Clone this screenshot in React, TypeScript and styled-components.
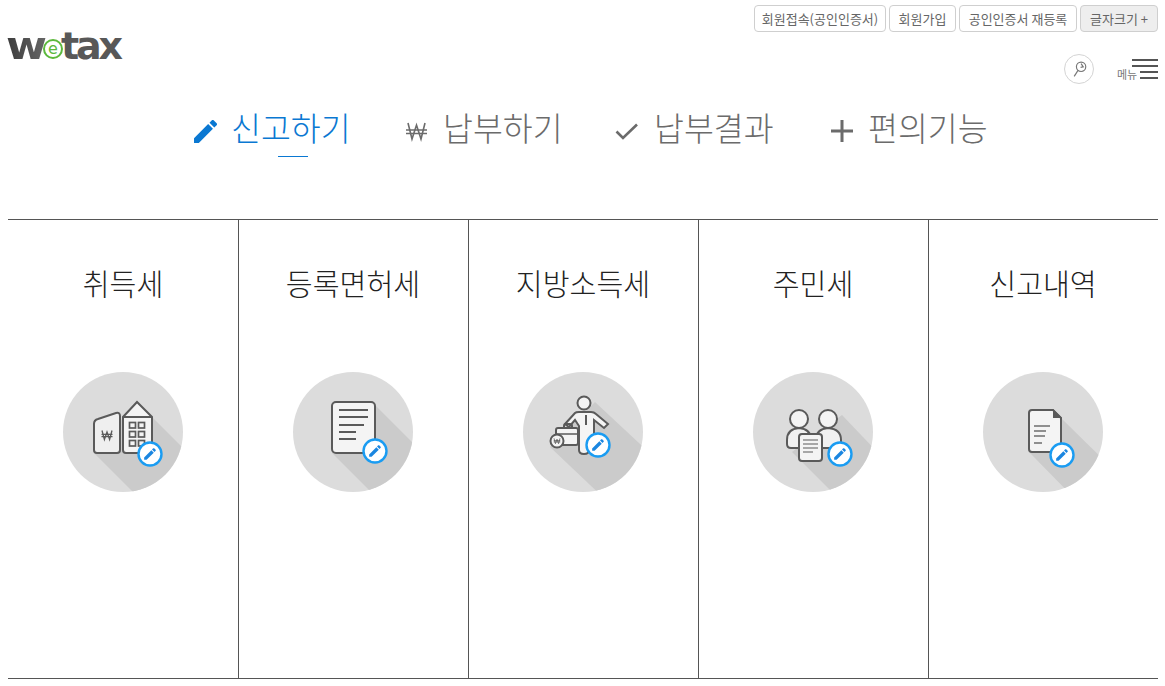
import React from 'react'
import styled, { createGlobalStyle } from 'styled-components'

const GlobalStyle = createGlobalStyle`
  html, body {
    margin: 0;
    padding: 0;
    background: #fff;
    font-family: "Noto Sans CJK KR", "Noto Sans", sans-serif;
  }
`

const Page = styled.div`
  width: 1150px;
  height: 686px;
  padding: 0 7px 0 8px;
  overflow: hidden;
`

const Header = styled.header`
  display: flex;
  justify-content: space-between;
  height: 105px;
`

const Logo = styled.div`
  display: flex;
  align-items: baseline;
  height: 42px;
  margin-top: 25px;
  font-family: "DejaVu Sans", sans-serif;
  font-weight: 700;
  font-size: 38px;
  line-height: 42px;
`

const LogoW = styled.span`
  display: inline-block;
  margin: 0 2px 0 -2px;
  letter-spacing: -1.6px;
  transform: scaleX(1.17);
  transform-origin: left center;
  background: linear-gradient(90deg, #3c3c3c, #666);
  background-clip: text;
  color: transparent;
`

const LogoE = styled.span`
  display: inline-flex;
  align-items: center;
  justify-content: center;
  align-self: flex-start;
  box-sizing: border-box;
  width: 20px;
  height: 20px;
  margin: 14px -2px 0 1.5px;
  border: 2px solid #5cb83c;
  border-radius: 50%;
  font-weight: 400;
  font-size: 16px;
  line-height: 1;
  color: #5cb83c;
`

const LogoTax = styled.span`
  letter-spacing: -3.2px;
  color: #585858;
`

const HeaderRight = styled.div`
  display: flex;
  flex-direction: column;
  align-items: flex-end;
  padding-top: 5px;
`

const TopLinks = styled.div`
  display: flex;
  gap: 3px;
`

const TopLink = styled.a<{ $width: number; $muted?: boolean }>`
  display: flex;
  align-items: center;
  justify-content: center;
  box-sizing: border-box;
  width: ${p => p.$width}px;
  height: 27px;
  border: 1px solid #cfcfcf;
  border-radius: 4px;
  background: ${p => (p.$muted ? '#eeeeee' : '#fff')};
  font-size: 13px;
  color: #666;
  white-space: nowrap;
`

const Tools = styled.div`
  display: flex;
  align-items: flex-start;
  margin-top: 22px;
`

const SearchButton = styled.button`
  display: flex;
  align-items: center;
  justify-content: center;
  box-sizing: border-box;
  width: 30px;
  height: 30px;
  padding: 0;
  border: 1px solid #d4d4d4;
  border-radius: 50%;
  background: #fff;
`

const MenuButton = styled.div`
  position: relative;
  width: 41px;
  height: 21px;
  margin: 5px 0 0 23px;
`

const MenuLabel = styled.span`
  position: absolute;
  left: 0;
  top: 8px;
  font-size: 11px;
  line-height: 14px;
  color: #777;
`

const MenuBar = styled.i<{ $top: number; $short?: boolean }>`
  position: absolute;
  right: 0;
  top: ${p => p.$top}px;
  width: ${p => (p.$short ? 18 : 26)}px;
  height: 2px;
  background: #555;
`

const Nav = styled.nav`
  display: flex;
  height: 114px;
  padding-left: 185px;
`

const NavItem = styled.a<{ $active?: boolean; $width?: number; $gap: number }>`
  position: relative;
  display: flex;
  align-items: flex-start;
  flex: none;
  gap: ${p => p.$gap}px;
  width: ${p => (p.$width ? `${p.$width}px` : 'auto')};
  height: 46px;
  font-size: 32.5px;
  font-weight: 300;
  line-height: 44px;
  color: ${p => (p.$active ? '#0a78d2' : '#6b6b6b')};
`

const NavIcon = styled.svg`
  align-self: center;
  flex: none;
  margin-top: 6px;
  overflow: visible;
`

const ActiveBar = styled.span`
  position: absolute;
  left: 85px;
  top: 51px;
  width: 30px;
  height: 1px;
  background: #0a78d2;
`

const Board = styled.section`
  display: flex;
  height: 458px;
  border-top: 1px solid #555;
  border-bottom: 1px solid #555;
`

const Column = styled.div`
  display: flex;
  flex-direction: column;
  align-items: center;
  box-sizing: border-box;
  width: 230px;
  padding-top: 40px;
  & + & {
    box-shadow: inset 1px 0 0 #555;
  }
`

const ColumnTitle = styled.h2`
  margin: 0;
  font-size: 29.2px;
  font-weight: 300;
  line-height: 44px;
  color: #222;
`

const Disc = styled.svg`
  display: block;
  margin-top: 68px;
`

const PENCIL = 'M3 17.25V21h3.75L17.81 9.94l-3.75-3.75L3 17.25zM20.71 7.04c.39-.39.39-1.02 0-1.41l-2.34-2.34c-.39-.39-1.02-.39-1.41 0l-1.83 1.83 3.75 3.75 1.83-1.83z'

const Badge = ({ x, y }: { x: number; y: number }) => (
  <g>
    <circle cx={x} cy={y} r={11.5} fill="#fff" stroke="#1a9cf2" strokeWidth={2.4} />
    <path d={PENCIL} fill="#1a86e0" transform={`translate(${x - 7.8} ${y - 7.8}) scale(0.65)`} />
  </g>
)

const ink = { fill: 'none', stroke: '#5a5a5a', strokeWidth: 2 }
const sheet = { fill: '#f4f4f4', stroke: '#5a5a5a', strokeWidth: 2 }

const DiscIcon = ({ id, shadow, children }: { id: string; shadow: string; children: React.ReactNode }) => (
  <Disc width={120} height={120} viewBox="0 0 120 120">
    <defs>
      <clipPath id={id}>
        <circle cx={60} cy={60} r={60} />
      </clipPath>
    </defs>
    <circle cx={60} cy={60} r={60} fill="#dcdcdc" />
    <polygon points={shadow} fill="#cbcbcb" clipPath={`url(#${id})`} />
    {children}
  </Disc>
)

const WonMark = ({ x, y, s = 1 }: { x: number; y: number; s?: number }) => (
  <g transform={`translate(${x} ${y}) scale(${s})`} fill="none" stroke="#5a5a5a" strokeWidth={1.3}>
    <path d="M-5 -4.5 L-2.6 4.5 L0 -3 L2.6 4.5 L5 -4.5" />
    <path d="M-5.5 -0.6 H5.5 M-5.5 1.6 H5.5" />
  </g>
)

const AcquisitionIcon = () => (
  <DiscIcon id="d1" shadow="74,29 89,45 130,86 130,130 80,130 31,81">
    <path d="M31 52 Q31 48 35 47 L53 41 Q57 40 57 44 V78 Q57 81 54 81 H34 Q31 81 31 78 Z" {...sheet} fill="#efefef" />
    <WonMark x={44} y={63} />
    <path d="M60 45 L74 30 L89 45 V78 Q89 81 86 81 H63 Q60 81 60 78 Z" {...sheet} />
    <path d="M60 45 H89" {...ink} />
    {[50.5, 59.5, 68.5].map(y =>
      [66.5, 75.5].map(x => <rect key={`${x}-${y}`} x={x} y={y} width={6} height={5.5} {...ink} strokeWidth={1.7} />)
    )}
    <Badge x={87} y={82} />
  </DiscIcon>
)

const RegistrationIcon = () => (
  <DiscIcon id="d2" shadow="82,33 130,81 130,130 88,130 39,81">
    <rect x={39} y={30} width={43} height={51} rx={4} {...sheet} />
    <path d="M46 38 H75 M46 45 H75 M46 53 H71 M46 60 H63 M46 67 H63" {...ink} />
    <Badge x={82} y={79} />
  </DiscIcon>
)

const IncomeIcon = () => (
  <DiscIcon id="d3" shadow="72,30 130,84 130,130 85,130 27,75">
    <circle cx={61} cy={31} r={6.5} {...sheet} />
    <path d="M42 52 L52 41 Q53 40 56 40 H68 Q71 40 73 42 L85 52 L81 56 L71 48 V66 H66 V78 Q66 82 61 82 Q56 82 56 78 V54 L52 48 L46 55 Z" {...sheet} />
    <path d="M63 43 V53" {...ink} />
    <path d="M41 56 V54 Q41 52 43 52 H47 Q49 52 49 54 V56" {...ink} />
    <rect x={33} y={56} width={22} height={17} rx={2} {...sheet} />
    <path d="M34 62 H54" {...ink} strokeWidth={1.5} />
    <circle cx={34} cy={69} r={6.5} {...sheet} />
    <WonMark x={34} y={69} s={0.6} />
    <Badge x={75} y={73} />
  </DiscIcon>
)

const ResidentIcon = () => (
  <DiscIcon id="d4" shadow="89,43 130,86 130,130 89,130 39,80">
    <path d="M34 72 V68 Q34 57 46 56 Q58 57 58 68 V72 Q58 76 54 76 H38 Q34 76 34 72 Z" {...sheet} fill="#f1f1f1" />
    <path d="M63 72 V68 Q63 57 75 56 Q88 57 88 68 V72 Q88 76 84 76 H67 Q63 76 63 72 Z" {...sheet} fill="#f1f1f1" />
    <circle cx={46} cy={47} r={9} {...sheet} />
    <circle cx={75} cy={47} r={9} {...sheet} />
    <rect x={46} y={62} width={23} height={27} rx={3} {...sheet} />
    <path d="M50 68 H65 M50 72 H65 M50 76 H65 M50 80 H60" {...ink} strokeWidth={1.2} />
    <Badge x={87} y={82} />
  </DiscIcon>
)

const HistoryIcon = () => (
  <DiscIcon id="d5" shadow="78,46 130,97 130,130 95,130 46,80">
    <path d="M49 38 H70 L78 46 V77 Q78 80 75 80 H49 Q46 80 46 77 V41 Q46 38 49 38 Z" {...sheet} />
    <path d="M70 37 L79 46 H70 Z" fill="#5a5a5a" />
    <path d="M51 54 H67 M51 59 H63 M51 64 H62 M51 71 H59" fill="none" stroke="#8f8f8f" strokeWidth={2} />
    <Badge x={79} y={83} />
  </DiscIcon>
)

const columns = [
  { title: '취득세', Icon: AcquisitionIcon },
  { title: '등록면허세', Icon: RegistrationIcon },
  { title: '지방소득세', Icon: IncomeIcon },
  { title: '주민세', Icon: ResidentIcon },
  { title: '신고내역', Icon: HistoryIcon }
]

export default function App() {
  return (
    <Page>
      <GlobalStyle />
      <Header>
        <Logo>
          <LogoW>w</LogoW>
          <LogoE>e</LogoE>
          <LogoTax>tax</LogoTax>
        </Logo>
        <HeaderRight>
          <TopLinks>
            <TopLink $width={132}>회원접속(공인인증서)</TopLink>
            <TopLink $width={67}>회원가입</TopLink>
            <TopLink $width={118}>공인인증서 재등록</TopLink>
            <TopLink $width={78} $muted>글자크기 +</TopLink>
          </TopLinks>
          <Tools>
            <SearchButton aria-label="검색">
              <svg width={15} height={17} viewBox="0 0 14 16" fill="none" stroke="#777" strokeWidth={1.1}>
                <circle cx={8.5} cy={5.5} r={4.4} />
                <path d="M5.6 8.8 L2 14.5" />
                <path d="M8.5 2.5 L10.5 5.5 L8 6" />
              </svg>
            </SearchButton>
            <MenuButton>
              <MenuLabel>메뉴</MenuLabel>
              <MenuBar $top={0} />
              <MenuBar $top={6} />
              <MenuBar $top={12} $short />
              <MenuBar $top={18} $short />
            </MenuButton>
          </Tools>
        </HeaderRight>
      </Header>
      <Nav>
        <NavItem $active $width={213} $gap={15}>
          <NavIcon width={23} height={23} viewBox="2.2 3 18 18">
            <path d={PENCIL} fill="#0a78d2" />
          </NavIcon>
          신고하기
          <ActiveBar />
        </NavItem>
        <NavItem $width={209} $gap={16}>
          <NavIcon width={21} height={20} viewBox="0 0 21 20" fill="none" stroke="#6b6b6b" strokeWidth={1.6}>
            <path d="M2 2 L6 18 L10.5 4 L15 18 L19 2" />
            <path d="M0 9 H21 M0 12.5 H21" />
          </NavIcon>
          납부하기
        </NavItem>
        <NavItem $width={216} $gap={16}>
          <NavIcon width={23} height={17} viewBox="0 0 23 17" fill="none" stroke="#6b6b6b" strokeWidth={2.6}>
            <path d="M1.5 8.5 L8 15 L22 1.5" />
          </NavIcon>
          납부결과
        </NavItem>
        <NavItem $gap={15}>
          <NavIcon width={22} height={22} viewBox="0 0 22 22" fill="none" stroke="#6b6b6b" strokeWidth={3}>
            <path d="M0 11 H22 M11 0 V22" />
          </NavIcon>
          편의기능
        </NavItem>
      </Nav>
      <Board>
        {columns.map(({ title, Icon }) => (
          <Column key={title}>
            <ColumnTitle>{title}</ColumnTitle>
            <Icon />
          </Column>
        ))}
      </Board>
    </Page>
  )
}
